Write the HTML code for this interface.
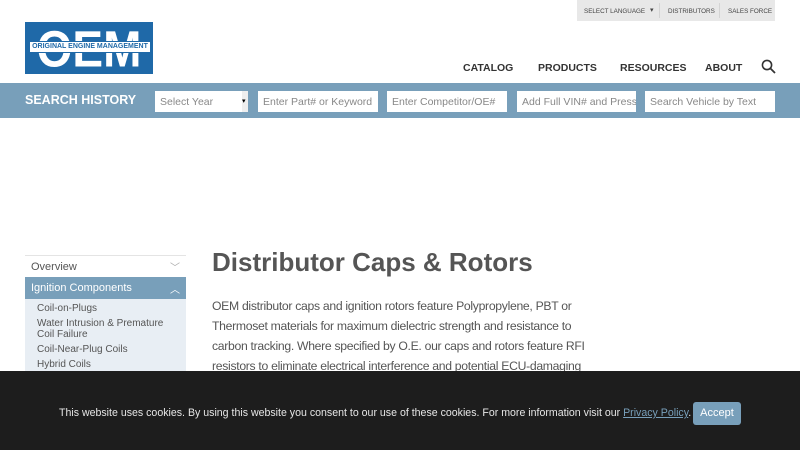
<!DOCTYPE html>
<html><head><meta charset="utf-8"><style>
*{margin:0;padding:0;box-sizing:border-box}
body{width:800px;height:450px;overflow:hidden;background:#fff;font-family:"Liberation Sans",sans-serif;position:relative}
.top{position:absolute;left:577px;top:0;width:198px;height:21px;background:#e8e8e8;font-size:6.3px;color:#444;white-space:nowrap}
.top span{position:absolute;top:8px}
.sep{position:absolute;top:3px;width:1px;height:15px;background:#d4d4d4}
.logo{position:absolute;left:25px;top:22px;width:128px;height:52px;background:#1f69a8;overflow:hidden}
.nav{position:absolute;top:62px;font-size:10.5px;font-weight:bold;color:#333;white-space:nowrap}
.bar{position:absolute;left:0;top:83px;width:800px;height:35px;background:#789fba}
.bar .t{position:absolute;left:25px;top:10px;color:#fff;font-weight:bold;font-size:12.5px}
.in{position:absolute;top:8px;height:21px;background:#fff;font-size:10.5px;color:#888;padding:5px 5px;white-space:nowrap;overflow:hidden}
.side{position:absolute;left:25px;top:255px;width:161px}
h1{position:absolute;left:212px;top:247px;font-size:26px;color:#555;font-weight:bold}
.p{position:absolute;left:212px;top:296px;width:378px;font-size:12.2px;letter-spacing:-0.3px;line-height:20px;color:#555}
.ck{position:absolute;left:0;top:371px;width:800px;height:79px;background:#1d1d1d;color:#e6e6e6;font-size:10.6px}
</style></head><body>
<div class="top"><span style="left:7px">SELECT LANGUAGE</span><span style="left:73px;top:6px;font-size:7px">▾</span><div class="sep" style="left:82px"></div><span style="left:91px">DISTRIBUTORS</span><div class="sep" style="left:142px"></div><span style="left:151px">SALES FORCE</span></div>
<div class="logo">
<div style="position:absolute;left:0;top:0;width:128px;height:52px;color:#fff;font-weight:bold;font-size:46px;line-height:54px;text-align:center;white-space:nowrap;transform:scaleY(1.1)">OEM</div>
<div style="position:absolute;left:4px;top:19px;width:122px;height:12px;background:#fff;border:1px solid #1f69a8;color:#1f69a8;font-size:7px;font-weight:bold;text-align:center;line-height:10px;white-space:nowrap">ORIGINAL ENGINE MANAGEMENT</div>
</div>
<div class="nav" style="left:463px">CATALOG</div>
<div class="nav" style="left:538px">PRODUCTS</div>
<div class="nav" style="left:620px">RESOURCES</div>
<div class="nav" style="left:705px">ABOUT</div>
<svg style="position:absolute;left:761px;top:59px" width="15" height="15" viewBox="0 0 15 15"><circle cx="6" cy="6" r="4.6" fill="none" stroke="#333" stroke-width="1.6"/><path d="M9.5 9.5L14 14" stroke="#333" stroke-width="1.8"/></svg>
<div class="bar"><div class="t">SEARCH HISTORY</div>
<div class="in" style="left:155px;width:93px">Select Year<span style="position:absolute;right:0;top:0;width:6px;height:21px;background:#eee;font-size:7px;color:#000;line-height:21px">▾</span></div>
<div class="in" style="left:258px;width:120px">Enter Part# or Keyword</div>
<div class="in" style="left:387px;width:120px">Enter Competitor/OE#</div>
<div class="in" style="left:517px;width:119px">Add Full VIN# and Press Enter</div>
<div class="in" style="left:645px;width:130px">Search Vehicle by Text</div>
</div>
<div class="side">
<div style="height:22px;border-top:1px solid #e4e4e4;font-size:11px;color:#555;padding:5px 6px;position:relative">Overview<span style="position:absolute;right:6px;top:3px;color:#aaa;font-size:10px">﹀</span></div>
<div style="height:22px;background:#789fba;color:#fff;font-size:11px;padding:5px 6px;position:relative">Ignition Components<span style="position:absolute;right:6px;top:4px;font-size:10px">︿</span></div>
<div style="background:#e8eef4;height:72px;padding:4px 12px;font-size:10px;color:#555;line-height:11px">
<div style="margin-bottom:4px">Coil-on-Plugs</div>
<div style="margin-bottom:4px">Water Intrusion &amp; Premature Coil Failure</div>
<div style="margin-bottom:4px">Coil-Near-Plug Coils</div>
<div>Hybrid Coils</div></div>
</div>
<h1>Distributor Caps &amp; Rotors</h1>
<div class="p">OEM distributor caps and ignition rotors feature Polypropylene, PBT or Thermoset materials for maximum dielectric strength and resistance to carbon tracking. Where specified by O.E. our caps and rotors feature RFI resistors to eliminate electrical interference and potential ECU-damaging</div>
<div class="ck"><div style="position:absolute;left:59px;top:36px;white-space:nowrap">This website uses cookies. By using this website you consent to our use of these cookies. For more information visit our <span style="color:#789fba;text-decoration:underline">Privacy Policy</span>.</div>
<div style="position:absolute;left:693px;top:31px;width:48px;height:23px;background:#789fba;border-radius:3px;color:#fff;font-size:11px;text-align:center;line-height:23px">Accept</div></div>
</body></html>
